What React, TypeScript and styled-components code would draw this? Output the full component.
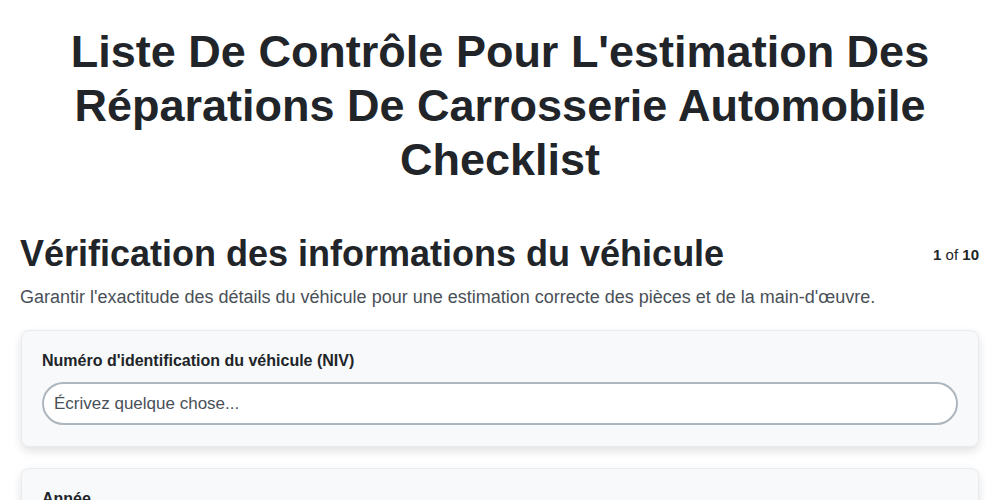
import styled, { createGlobalStyle } from "styled-components";

const GlobalStyle = createGlobalStyle`
  body {
    margin: 0;
    background: #ffffff;
    font-family: "Liberation Sans", Arial, sans-serif;
    color: #212529;
  }
  * {
    box-sizing: border-box;
  }
`;

const Page = styled.div`
  padding: 25px 20px 40px;
`;

const Title = styled.h1`
  margin: 0 auto 45px;
  max-width: 900px;
  text-align: center;
  font-size: 45px;
  line-height: 54px;
  font-weight: 700;
  color: #212529;
`;

const SectionHeader = styled.div`
  display: flex;
  justify-content: space-between;
  align-items: center;
`;

const SectionTitle = styled.h2`
  margin: 0;
  font-size: 36px;
  line-height: 44px;
  font-weight: 700;
`;

const Counter = styled.div`
  font-size: 15px;
  color: #212529;
  padding-right: 1px;

  b {
    font-weight: 700;
  }
`;

const Description = styled.p`
  margin: 9px 0 21px;
  font-size: 18px;
  line-height: 24px;
  color: #495057;
`;

const Card = styled.div`
  background: #f8f9fa;
  border: 1px solid #e9ecef;
  border-radius: 8px;
  box-shadow: 0 4px 10px rgba(0, 0, 0, 0.12);
  padding: 19px 20px 21px;
  margin: 0 1px 21px;
`;

const Label = styled.label`
  display: block;
  font-size: 16px;
  font-weight: 700;
  line-height: 22px;
  margin-bottom: 10px;
`;

const TextInput = styled.input`
  width: 100%;
  height: 43px;
  padding: 0 10px;
  border: 2px solid #adb5bd;
  border-radius: 22px;
  background: #ffffff;
  font-family: "Liberation Sans", Arial, sans-serif;
  font-size: 17px;
  color: #212529;
  outline: none;

  &::placeholder {
    color: #495057;
  }
`;

const fields = ["Numéro d'identification du véhicule (NIV)", "Année", "Marque"];

export default function App() {
  return (
    <>
      <GlobalStyle />
      <Page>
        <Title>
          Liste De Contrôle Pour L'estimation Des Réparations De Carrosserie
          Automobile Checklist
        </Title>
        <SectionHeader>
          <SectionTitle>Vérification des informations du véhicule</SectionTitle>
          <Counter>
            <b>1</b> of <b>10</b>
          </Counter>
        </SectionHeader>
        <Description>
          Garantir l'exactitude des détails du véhicule pour une estimation
          correcte des pièces et de la main-d'œuvre.
        </Description>
        {fields.map((f) => (
          <Card key={f}>
            <Label>{f}</Label>
            <TextInput placeholder="Écrivez quelque chose..." />
          </Card>
        ))}
      </Page>
    </>
  );
}
